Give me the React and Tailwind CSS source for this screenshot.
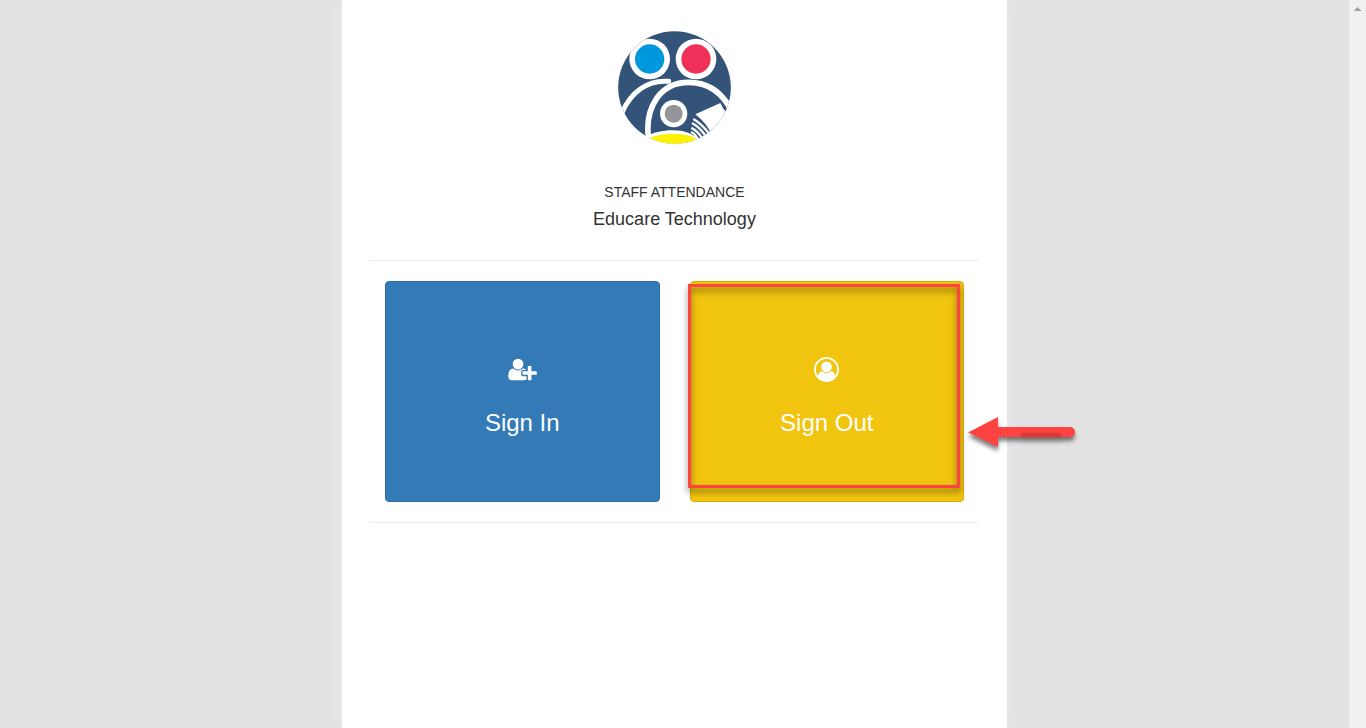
import React from "react";

function Logo() {
  return (
    <svg className="h-[113px] w-[113px]" viewBox="24 33 339 339" role="img" aria-label="Educare Technology logo">
      <defs>
        <clipPath id="disc">
          <circle cx="193.5" cy="202.5" r="169" />
        </clipPath>
      </defs>
      <g clipPath="url(#disc)">
        <rect x="24" y="33" width="339" height="339" fill="#335378" />
        <circle cx="119" cy="117" r="61" fill="#fff" />
        <circle cx="119" cy="117" r="44" fill="#0098dc" />
        <circle cx="258" cy="117" r="61" fill="#fff" />
        <circle cx="258" cy="117" r="44" fill="#ef3058" />
        <path d="M24 272 L43 276 C40 310 62 348 108 350 L112 390 L24 390 Z" fill="#335378" />
        <path d="M24 274 L42 276 Q54 306 72 324 L50 350 L24 350 Z" fill="#fff" />
        <path d="M36 278 C62 218 112 178 176 184" fill="none" stroke="#fff" strokeWidth="15" strokeLinecap="round" />
        <path d="M115 352 C105 262 150 187 236 187 C294 187 338 218 366 275" fill="none" stroke="#fff" strokeWidth="17" />
        <path d="M104 350 C130 338 155 331 190 331 C222 331 246 340 264 357 L264 390 L104 390 Z" fill="#fff" />
        <path d="M119 354 C165 337 218 338 256 354 L256 380 L119 380 Z" fill="#fdf105" />
        <circle cx="191" cy="281" r="41" fill="#fff" />
        <circle cx="191" cy="281" r="27" fill="#939598" />
        <path d="M256 283 L331 249 Q340 270 354 283 L366 283 L366 380 L280 380 L304 342 Q290 310 256 283 Z" fill="#fff" />
        <path
          d="M250 297 Q276 312 299 343 M246 309 Q272 324 288 350 M244 323 Q264 334 276 354 M243 336 Q256 342 264 358"
          fill="none"
          stroke="#fff"
          strokeWidth="7"
        />
      </g>
    </svg>
  );
}

function UserPlusIcon() {
  return (
    <svg className="h-[25px] w-[29px]" viewBox="0 0 2048 1792" fill="currentColor" aria-hidden="true">
      <path d="M704 896q-159 0-271.5-112.5t-112.5-271.5 112.5-271.5 271.5-112.5 271.5 112.5 112.5 271.5-112.5 271.5-271.5 112.5zm960 128h352q13 0 22.5 9.5t9.5 22.5v192q0 13-9.5 22.5t-22.5 9.5h-352v352q0 13-9.5 22.5t-22.5 9.5h-192q-13 0-22.5-9.5t-9.5-22.5v-352h-352q-13 0-22.5-9.5t-9.5-22.5v-192q0-13 9.5-22.5t22.5-9.5h352v-352q0-13 9.5-22.5t22.5-9.5h192q13 0 22.5 9.5t9.5 22.5v352zm-736 224q0 52 38 90t90 38h256v238q-68 50-171 50h-874q-121 0-194-69t-73-190q0-53 3.5-103.5t14-109 26.5-108.5 43-97.5 62-81 85.5-53.5 111.5-20q19 0 39 17 79 61 154.5 91.5t164.5 30.5 164.5-30.5 154.5-91.5q20-17 39-17 132 0 217 96h-223q-52 0-90 38t-38 90v192z" />
    </svg>
  );
}

function UserCircleIcon() {
  return (
    <svg className="h-[25px] w-[25px]" viewBox="0 0 1792 1792" fill="currentColor" fillRule="evenodd" aria-hidden="true">
      <path d="M896 0q182 0 348 71t286 191 191 286 71 348q0 181-70.5 347t-190.5 286-286 191.5-349 71.5-349-71-285.5-191.5-190.5-286-71-347.5 71-348 191-286 286-191 348-71zm619 1351q149-205 149-455 0-156-61-298t-164-245-245-164-298-61-298 61-245 164-164 245-61 298q0 250 149 455 66-327 306-327 131 128 313 128t313-128q240 0 306 327zm-235-647q0-159-112.5-271.5t-271.5-112.5-271.5 112.5-112.5 271.5 112.5 271.5 271.5 112.5 271.5-112.5 112.5-271.5z" />
    </svg>
  );
}

function Arrow() {
  return (
    <svg
      className="pointer-events-none absolute top-[134px] left-[278px] h-[34px] w-[108px] overflow-visible drop-shadow-[0_4px_2px_rgba(0,0,0,0.5)]"
      viewBox="0 0 108 34"
      aria-hidden="true"
    >
      <defs>
        <filter id="soft" x="-10%" y="-60%" width="120%" height="220%">
          <feGaussianBlur stdDeviation="1" />
        </filter>
      </defs>
      <path d="M0 17.5 L30 2 V12 H102 A5 5 0 0 1 102 22 H30 V32 Z" fill="#ff4343" />
      <rect x="53" y="18" width="41" height="4" rx="1" fill="#d03838" filter="url(#soft)" />
    </svg>
  );
}

function AttendanceButton({ icon, label, tone }) {
  return (
    <button
      type="button"
      className={`flex h-[221px] w-full cursor-pointer flex-col items-center rounded border pt-[75px] text-2xl text-white ${tone}`}
    >
      {icon}
      <span className="mt-[25px]">{label}</span>
    </button>
  );
}

export default function App() {
  return (
    <div className="flex min-h-screen bg-[#e2e2e2] font-['Liberation_Sans',Arial,sans-serif] text-[#333]">
      <div className="flex flex-1 justify-center">
        <main className="w-[665px] max-w-full bg-white px-7 pt-[31px] shadow-[0_0_16px_rgba(255,255,255,0.35)]">
          <header className="flex flex-col items-center">
            <Logo />
            <p className="mt-[38px] text-sm leading-5">STAFF ATTENDANCE</p>
            <h1 className="mt-[7px] text-lg leading-5">Educare Technology</h1>
          </header>
          <hr className="mt-[31px] border-[#eee]" />
          <div className="my-5 grid grid-cols-2 gap-[30px] px-[15px]">
            <AttendanceButton icon={<UserPlusIcon />} label="Sign In" tone="border-[#2e6da4] bg-[#337ab7]" />
            <div className="relative">
              <AttendanceButton icon={<UserCircleIcon />} label="Sign Out" tone="border-[#d9ae0c] bg-[#f1c40f]" />
              <div className="pointer-events-none absolute top-[3px] right-1 bottom-[14px] -left-[2px] border-3 border-[#ff4343] drop-shadow-[0_4px_3px_rgba(0,0,0,0.5)]" />
              <Arrow />
            </div>
          </div>
          <hr className="border-[#eee]" />
        </main>
      </div>
      <div className="flex w-[17px] justify-center bg-[#f0f0f0] pt-[7px]" aria-hidden="true">
        <svg className="h-1 w-[7px]" viewBox="0 0 7 4" shapeRendering="crispEdges" fill="#a3a3a3">
          <path d="M3 0h1v1h1v1h1v1h1v1H0V3h1V2h1V1h1z" />
        </svg>
      </div>
    </div>
  );
}
